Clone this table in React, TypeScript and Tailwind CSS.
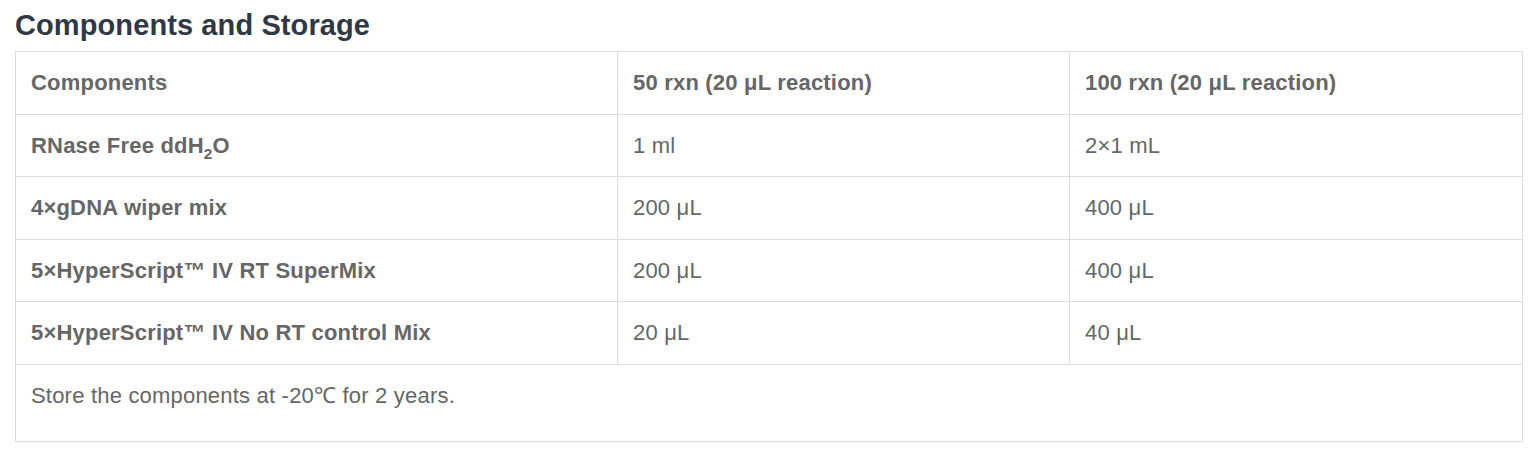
const rows: [React.ReactNode, string, string][] = [
  [
    <>
      RNase Free ddH<sub className="text-[0.7em] align-[-0.2em] leading-none">2</sub>O
    </>,
    "1 ml",
    "2×1 mL",
  ],
  ["4×gDNA wiper mix", "200 μL", "400 μL"],
  ["5×HyperScript™ IV RT SuperMix", "200 μL", "400 μL"],
  ["5×HyperScript™ IV No RT control Mix", "20 μL", "40 μL"],
];

function Cell({ children, bold }: { children: React.ReactNode; bold?: boolean }) {
  return (
    <td
      className={`border border-[#dddddd] px-[15px] py-[15px] leading-[31.5px] align-top ${
        bold ? "font-bold" : ""
      }`}
    >
      {children}
    </td>
  );
}

export default function App() {
  return (
    <div className="bg-white min-h-screen px-[15px] pt-[5px] font-['Liberation_Sans',Arial,sans-serif]">
      <h2 className="text-[29px] leading-[40px] tracking-[0.1px] font-bold text-[#303845] mb-[6px]">
        Components and Storage
      </h2>
      <table className="w-[1507px] border-collapse table-fixed text-[22px] tracking-[0.2px] text-[#666666]">
        <colgroup>
          <col className="w-[602px]" />
          <col className="w-[452px]" />
          <col className="w-[453px]" />
        </colgroup>
        <thead>
          <tr>
            <Cell bold>Components</Cell>
            <Cell bold>50 rxn (20 μL reaction)</Cell>
            <Cell bold>100 rxn (20 μL reaction)</Cell>
          </tr>
        </thead>
        <tbody>
          {rows.map(([name, a, b], i) => (
            <tr key={i}>
              <Cell bold>{name}</Cell>
              <Cell>{a}</Cell>
              <Cell>{b}</Cell>
            </tr>
          ))}
          <tr>
            <td
              colSpan={3}
              className="border border-[#dddddd] px-[15px] pt-[15px] pb-[30px] leading-[31.5px] align-top"
            >
              Store the components at -20℃ for 2 years.
            </td>
          </tr>
        </tbody>
      </table>
    </div>
  );
}
